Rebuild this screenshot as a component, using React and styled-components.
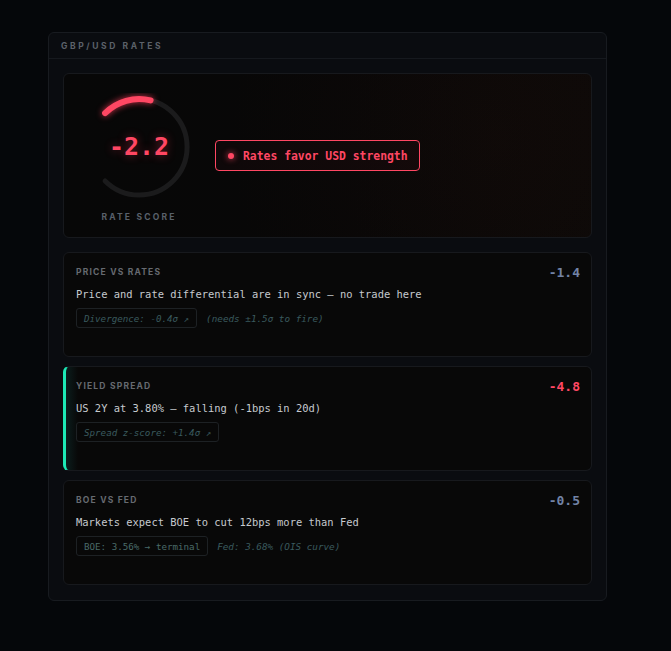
import styled, { createGlobalStyle } from "styled-components"

const GlobalStyle = createGlobalStyle`
body {
  margin: 0;
  background: #05070a;
}
`;

const Page = styled.div`
padding: 32px 0 40px 48px;
`;

const Panel = styled.div`
width: 557px;
background: #0a0c10;
border: solid 1px #181b20;
border-radius: 6px;
`;

const PanelHeader = styled.div`
height: 25px;
display: flex;
align-items: center;
padding-left: 12px;
border-bottom: solid 1px #16191e;
font-family: Inter, "Noto Sans", sans-serif;
font-size: 8.5px;
font-weight: 700;
letter-spacing: 2.6px;
color: #5c6169;
`;

const PanelBody = styled.div`
display: flex;
flex-direction: column;
gap: 9px;
padding: 14px 14px 15px 14px;
`;

const Hero = styled.div`
height: 163px;
display: flex;
align-items: center;
gap: 22px;
padding: 0 21px;
margin-bottom: 5px;
border: solid 1px #17191d;
border-radius: 6px;
background:
  radial-gradient(circle at 82% 40%, rgba(30, 14, 10, 0.25), transparent 60%),
  linear-gradient(90deg, #070707 0%, #080707 55%, #0c0908 100%);
`;

const GaugeColumn = styled.div`
display: flex;
flex-direction: column;
align-items: center;
gap: 11px;
margin-top: 4px;
`;

const Gauge = styled.div`
position: relative;
width: 108px;
height: 108px;
`;

const GaugeValue = styled.div`
position: absolute;
inset: 0;
display: flex;
align-items: center;
justify-content: center;
padding-bottom: 2px;
font-family: "DejaVu Sans Mono", monospace;
font-size: 25px;
font-weight: bold;
color: #ff4763;
text-shadow: 0 0 10px rgba(255, 60, 90, 0.45);
`;

const GaugeLabel = styled.span`
font-family: Inter, "Noto Sans", sans-serif;
font-size: 8.5px;
font-weight: 700;
letter-spacing: 2.2px;
color: #59606a;
`;

const Signal = styled.div`
height: 29px;
display: flex;
align-items: center;
gap: 9px;
padding: 0 11px 0 12px;
border: solid 1px #ff4763;
border-radius: 4px;
background: rgba(255, 60, 90, 0.03);
font-family: "DejaVu Sans Mono", monospace;
font-size: 11.4px;
font-weight: bold;
color: #ff4763;
`;

const Dot = styled.span`
width: 6px;
height: 6px;
border-radius: 50%;
background: #ff4763;
box-shadow: 0 0 6px #ff4763;
`;

const Card = styled.div`
min-height: 105px;
box-sizing: border-box;
padding: 13px 11px 12px ${(p) => (p.$accent ? "10px" : "12px")};
border: solid 1px #17191d;
border-left: ${(p) => (p.$accent ? "3px solid #1de9b6" : "1px solid #17191d")};
border-radius: 6px;
background: ${(p) =>
    p.$accent
      ? "linear-gradient(90deg, rgba(29, 233, 182, 0.08) 0px, #080808 12px)"
      : "#080808"};
`;

const CardTop = styled.div`
display: flex;
justify-content: space-between;
align-items: center;
height: 12px;
`;

const CardLabel = styled.span`
font-family: Inter, "Noto Sans", sans-serif;
font-size: 8.5px;
font-weight: 700;
letter-spacing: 1.2px;
color: #666a70;
`;

const CardValue = styled.span`
font-family: "DejaVu Sans Mono", monospace;
font-size: 13px;
font-weight: bold;
color: ${(p) => p.$color};
`;

const CardText = styled.div`
margin-top: 9px;
font-family: "DejaVu Sans Mono", monospace;
font-size: 10.45px;
line-height: 14px;
color: #c6cacf;
`;

const ChipRow = styled.div`
display: flex;
align-items: center;
gap: 9px;
margin-top: 7px;
`;

const Chip = styled.span`
height: 18px;
display: flex;
align-items: center;
padding: 0 7px;
border: solid 1px #1d2124;
border-radius: 3px;
font-family: "DejaVu Sans Mono", monospace;
font-size: 9.2px;
font-style: ${(p) => (p.$italic ? "italic" : "normal")};
color: ${(p) => (p.$italic ? "#3a5a5e" : "#4a6b69")};
`;

const Note = styled.span`
font-family: "DejaVu Sans Mono", monospace;
font-size: 9.3px;
font-style: italic;
color: #3a5a5e;
`;

const cards = [
    {
        label: "PRICE VS RATES",
        value: "-1.4",
        color: "#7283a6",
        text: "Price and rate differential are in sync — no trade here",
        chip: "Divergence: -0.4σ ↗",
        italic: true,
        note: "(needs ±1.5σ to fire)",
    },
    {
        label: "YIELD SPREAD",
        value: "-4.8",
        color: "#ff4763",
        text: "US 2Y at 3.80% — falling (-1bps in 20d)",
        chip: "Spread z-score: +1.4σ ↗",
        italic: true,
        accent: true,
    },
    {
        label: "BOE VS FED",
        value: "-0.5",
        color: "#7283a6",
        text: "Markets expect BOE to cut 12bps more than Fed",
        chip: "BOE: 3.56% → terminal",
        note: "Fed: 3.68% (OIS curve)",
    },
];

const App = () => {
    return (
        <Page>
            <GlobalStyle />
            <Panel>
                <PanelHeader>GBP/USD RATES</PanelHeader>
                <PanelBody>
                    <Hero>
                        <GaugeColumn>
                            <Gauge>
                                <svg width="108" height="108" viewBox="0 0 108 108">
                                    <path d="M20.1 20.1 A48 48 0 1 1 20.1 87.9" fill="none" stroke="#1b1b1c" strokeWidth="5" strokeLinecap="round" />
                                    <path d="M20.1 20.1 A48 48 0 0 1 65.6 7.4" fill="none" stroke="#ff4763" strokeWidth="6" strokeLinecap="round" style={{ filter: "drop-shadow(0 0 3px rgba(255,60,90,0.8))" }} />
                                </svg>
                                <GaugeValue>-2.2</GaugeValue>
                            </Gauge>
                            <GaugeLabel>RATE SCORE</GaugeLabel>
                        </GaugeColumn>
                        <Signal>
                            <Dot />
                            Rates favor USD strength
                        </Signal>
                    </Hero>

                    {cards.map((c) => (
                        <Card key={c.label} $accent={c.accent}>
                            <CardTop>
                                <CardLabel>{c.label}</CardLabel>
                                <CardValue $color={c.color}>{c.value}</CardValue>
                            </CardTop>
                            <CardText>{c.text}</CardText>
                            <ChipRow>
                                <Chip $italic={c.italic}>{c.chip}</Chip>
                                {c.note && <Note>{c.note}</Note>}
                            </ChipRow>
                        </Card>
                    ))}
                </PanelBody>
            </Panel>
        </Page>
    )
}

export default App;
